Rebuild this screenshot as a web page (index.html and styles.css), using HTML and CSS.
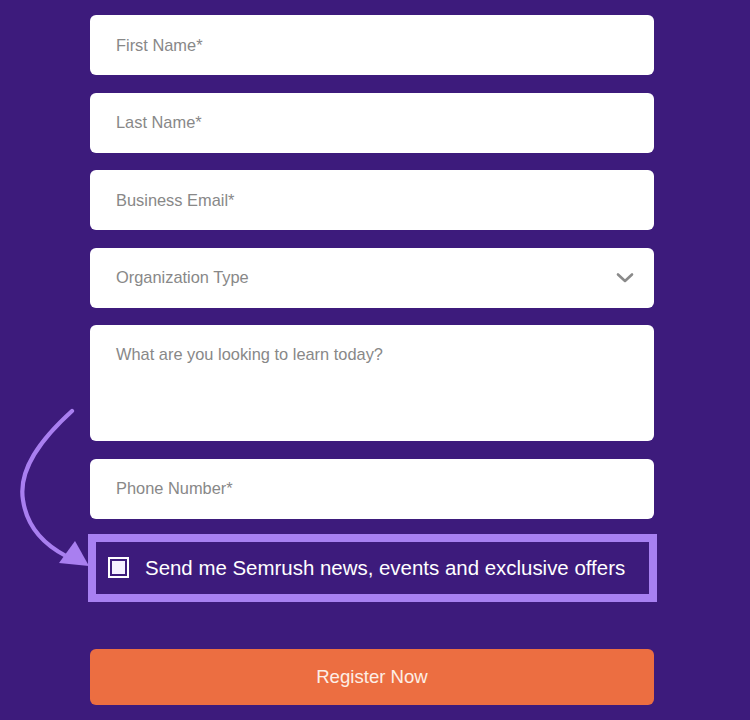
FILE: index.html
```html
<!DOCTYPE html>
<html lang="en">
<head>
  <meta charset="UTF-8" />
  <meta name="viewport" content="width=device-width, initial-scale=1.0" />
  <title>Register</title>
  <link rel="stylesheet" href="styles.css">
</head>
<body>
  <form class="signup">
    <div class="field"><span class="placeholder">First Name*</span></div>
    <div class="field"><span class="placeholder">Last Name*</span></div>
    <div class="field"><span class="placeholder">Business Email*</span></div>
    <div class="field select">
      <span class="placeholder">Organization Type</span>
      <svg class="chevron" width="18" height="12" viewBox="0 0 18 12">
        <path d="M2 2.5 L9 9 L16 2.5" fill="none" stroke="#8a8a8a" stroke-width="2.6" stroke-linecap="round" stroke-linejoin="round"/>
      </svg>
    </div>
    <div class="field textarea"><span class="placeholder">What are you looking to learn today?</span></div>
    <div class="field"><span class="placeholder">Phone Number*</span></div>

    <label class="consent">
      <span class="checkbox"><span class="checkbox-fill"></span></span>
      <span class="consent-text">Send me Semrush news, events and exclusive offers</span>
    </label>

    <button type="button" class="register">Register Now</button>
  </form>

  <!-- annotation arrow pointing at the consent checkbox -->
  <svg class="arrow" width="100" height="180" viewBox="0 0 100 180">
    <path d="M72 11 C 40 40, 18 70, 23 100 C 27 128, 45 145, 66 156" fill="none" stroke="#a97ff0" stroke-width="4.2" stroke-linecap="round"/>
    <polygon points="75,141 59,163 89,166" fill="#a97ff0"/>
  </svg>
</body>
</html>
```

FILE: styles.css
```css
body {
  margin: 0;
  background: #3d1b7c;
  font-family: 'Liberation Sans', Arial, sans-serif;
  min-height: 720px;
  position: relative;
}
.signup {
  width: 564px;
  margin-left: 90px;
  padding-top: 15px;
  display: flex;
  flex-direction: column;
}
.field {
  height: 60px;
  background: #fff;
  border-radius: 6px;
  margin-bottom: 17.5px;
  padding: 0 26px;
  display: flex;
  align-items: center;
  box-sizing: border-box;
}
.placeholder {
  color: #888;
  font-size: 16.4px;
}
.select {
  justify-content: space-between;
  padding-right: 20px;
}
.textarea {
  height: 116px;
  align-items: flex-start;
  padding-top: 20px;
}
.consent {
  margin: -2.5px -3px 0 -2px;
  height: 68px;
  border: 8px solid #a880f2;
  box-sizing: border-box;
  display: flex;
  align-items: center;
  padding-left: 12px;
  gap: 16px;
  color: #fff;
}
.checkbox {
  width: 21px;
  height: 21px;
  border: 2.5px solid #fff;
  box-sizing: border-box;
  padding: 2px;
  display: flex;
}
.checkbox-fill {
  flex: 1;
  background: #f5f0ff;
}
.consent-text {
  font-size: 20.45px;
  padding-top: 1px;
}
.register {
  margin-top: 47px;
  height: 56px;
  border: none;
  border-radius: 6px;
  background: #ec6e41;
  color: #fdeee6;
  font-family: inherit;
  font-size: 18.6px;
  cursor: pointer;
}
.arrow {
  position: absolute;
  left: 0;
  top: 400px;
}
```
